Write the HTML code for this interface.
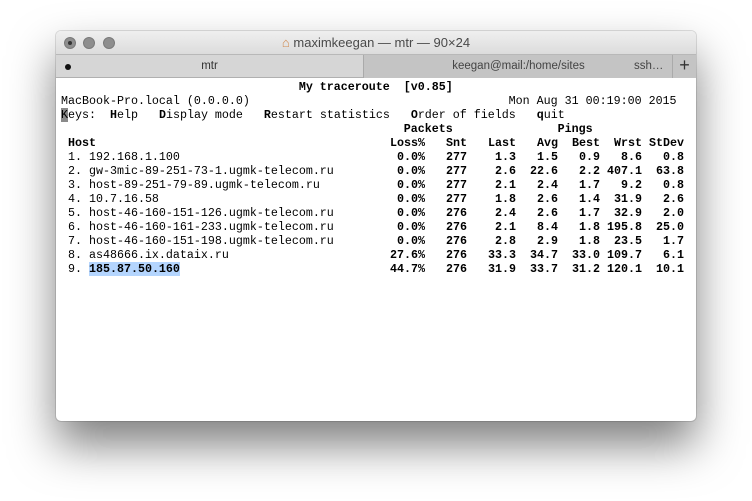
<!DOCTYPE html>
<html><head><meta charset="utf-8"><style>
*{margin:0;padding:0;box-sizing:border-box}
body{width:752px;height:501px;background:#fff;position:relative;overflow:hidden;font-family:"Liberation Sans",sans-serif}
.win{position:absolute;left:56px;top:31px;width:640px;height:390px;background:#fff;border-radius:5px;box-shadow:0 24px 45px rgba(0,0,0,0.5),0 0 0 1px rgba(0,0,0,0.12);overflow:hidden}
.title{position:absolute;left:0;top:0;width:640px;height:23px;background:linear-gradient(#efefef,#dcdcdc)}
.dot{position:absolute;top:6px;width:12px;height:12px;border-radius:50%;background:#8e8e8e;border:1px solid #7a7a7a}
.ttext{position:absolute;left:0;right:0;top:4px;text-align:center;font-size:13px;color:#4a4a4a}
.tabs{position:absolute;left:0;top:23px;width:640px;height:24px;background:#d6d6d6;border-top:1px solid #b8b8b8;border-bottom:1px solid #b0b0b0}
.tab2{position:absolute;left:307px;top:0;width:309px;height:23px;background:#c4c4c4;border-left:1px solid #aaa}
.plus{position:absolute;left:616px;top:0;width:24px;height:23px;background:#c4c4c4;border-left:1px solid #aaa;text-align:center;font-size:18px;line-height:20px;color:#333}
.tl{font-size:11.5px;color:#333;position:absolute;top:5px}
.term{position:absolute;left:5px;top:49px;font-family:"Liberation Mono",monospace;font-size:11.67px;line-height:14px;color:#000}
.term div{height:14px;white-space:pre}
.c{display:inline-block;text-align:right}
.b{font-weight:bold}
</style></head><body>
<div class="win">
 <div class="title">
  <div class="dot" style="left:8px"><div style="position:absolute;left:3px;top:3px;width:4px;height:4px;border-radius:50%;background:#333"></div></div>
  <div class="dot" style="left:27px"></div>
  <div class="dot" style="left:47px"></div>
  <div class="ttext"><span style="color:#d08a50">⌂</span> maximkeegan — mtr — 90×24</div>
 </div>
 <div class="tabs">
  <div style="position:absolute;left:9px;top:9px;width:6px;height:6px;border-radius:50%;background:#111"></div>
  <div class="tl" style="left:0;width:307px;text-align:center">mtr</div>
  <div class="tab2"><div class="tl" style="left:0;width:309px;text-align:center;color:#444">keegan@mail:/home/sites</div><div class="tl" style="left:270px;color:#444">ssh…</div></div>
  <div class="plus">+</div>
 </div>
 <div class="term">
<div class="b">                                  My traceroute  [v0.85]</div>
<div>MacBook-Pro.local (0.0.0.0)                                     Mon Aug 31 00:19:00 2015</div>
<div><span style="background:#8a8a8a">K</span>eys:  <span class="b">H</span>elp   <span class="b">D</span>isplay mode   <span class="b">R</span>estart statistics   <span class="b">O</span>rder of fields   <span class="b">q</span>uit</div>
<div class="b">                                                 Packets               Pings</div>
<div class="b"><span class="c" style="width:329px;text-align:left"> Host</span><span class="c" style="width:35px">Loss%</span><span class="c" style="width:42px">Snt</span><span class="c" style="width:49px">Last</span><span class="c" style="width:42px">Avg</span><span class="c" style="width:42px">Best</span><span class="c" style="width:42px">Wrst</span><span class="c" style="width:42px">StDev</span></div>
<div><span class="c" style="width:329px;text-align:left"> 1. 192.168.1.100</span><span class="b"><span class="c" style="width:35px">0.0%</span><span class="c" style="width:42px">277</span><span class="c" style="width:49px">1.3</span><span class="c" style="width:42px">1.5</span><span class="c" style="width:42px">0.9</span><span class="c" style="width:42px">8.6</span><span class="c" style="width:42px">0.8</span></span></div>
<div><span class="c" style="width:329px;text-align:left"> 2. gw-3mic-89-251-73-1.ugmk-telecom.ru</span><span class="b"><span class="c" style="width:35px">0.0%</span><span class="c" style="width:42px">277</span><span class="c" style="width:49px">2.6</span><span class="c" style="width:42px">22.6</span><span class="c" style="width:42px">2.2</span><span class="c" style="width:42px">407.1</span><span class="c" style="width:42px">63.8</span></span></div>
<div><span class="c" style="width:329px;text-align:left"> 3. host-89-251-79-89.ugmk-telecom.ru</span><span class="b"><span class="c" style="width:35px">0.0%</span><span class="c" style="width:42px">277</span><span class="c" style="width:49px">2.1</span><span class="c" style="width:42px">2.4</span><span class="c" style="width:42px">1.7</span><span class="c" style="width:42px">9.2</span><span class="c" style="width:42px">0.8</span></span></div>
<div><span class="c" style="width:329px;text-align:left"> 4. 10.7.16.58</span><span class="b"><span class="c" style="width:35px">0.0%</span><span class="c" style="width:42px">277</span><span class="c" style="width:49px">1.8</span><span class="c" style="width:42px">2.6</span><span class="c" style="width:42px">1.4</span><span class="c" style="width:42px">31.9</span><span class="c" style="width:42px">2.6</span></span></div>
<div><span class="c" style="width:329px;text-align:left"> 5. host-46-160-151-126.ugmk-telecom.ru</span><span class="b"><span class="c" style="width:35px">0.0%</span><span class="c" style="width:42px">276</span><span class="c" style="width:49px">2.4</span><span class="c" style="width:42px">2.6</span><span class="c" style="width:42px">1.7</span><span class="c" style="width:42px">32.9</span><span class="c" style="width:42px">2.0</span></span></div>
<div><span class="c" style="width:329px;text-align:left"> 6. host-46-160-161-233.ugmk-telecom.ru</span><span class="b"><span class="c" style="width:35px">0.0%</span><span class="c" style="width:42px">276</span><span class="c" style="width:49px">2.1</span><span class="c" style="width:42px">8.4</span><span class="c" style="width:42px">1.8</span><span class="c" style="width:42px">195.8</span><span class="c" style="width:42px">25.0</span></span></div>
<div><span class="c" style="width:329px;text-align:left"> 7. host-46-160-151-198.ugmk-telecom.ru</span><span class="b"><span class="c" style="width:35px">0.0%</span><span class="c" style="width:42px">276</span><span class="c" style="width:49px">2.8</span><span class="c" style="width:42px">2.9</span><span class="c" style="width:42px">1.8</span><span class="c" style="width:42px">23.5</span><span class="c" style="width:42px">1.7</span></span></div>
<div><span class="c" style="width:329px;text-align:left"> 8. as48666.ix.dataix.ru</span><span class="b"><span class="c" style="width:35px">27.6%</span><span class="c" style="width:42px">276</span><span class="c" style="width:49px">33.3</span><span class="c" style="width:42px">34.7</span><span class="c" style="width:42px">33.0</span><span class="c" style="width:42px">109.7</span><span class="c" style="width:42px">6.1</span></span></div>
<div><span class="c" style="width:329px;text-align:left"> 9. <span class="b" style="background:#b4d5fe">185.87.50.160</span></span><span class="b"><span class="c" style="width:35px">44.7%</span><span class="c" style="width:42px">276</span><span class="c" style="width:49px">31.9</span><span class="c" style="width:42px">33.7</span><span class="c" style="width:42px">31.2</span><span class="c" style="width:42px">120.1</span><span class="c" style="width:42px">10.1</span></span></div>
 </div>
</div>
</body></html>
